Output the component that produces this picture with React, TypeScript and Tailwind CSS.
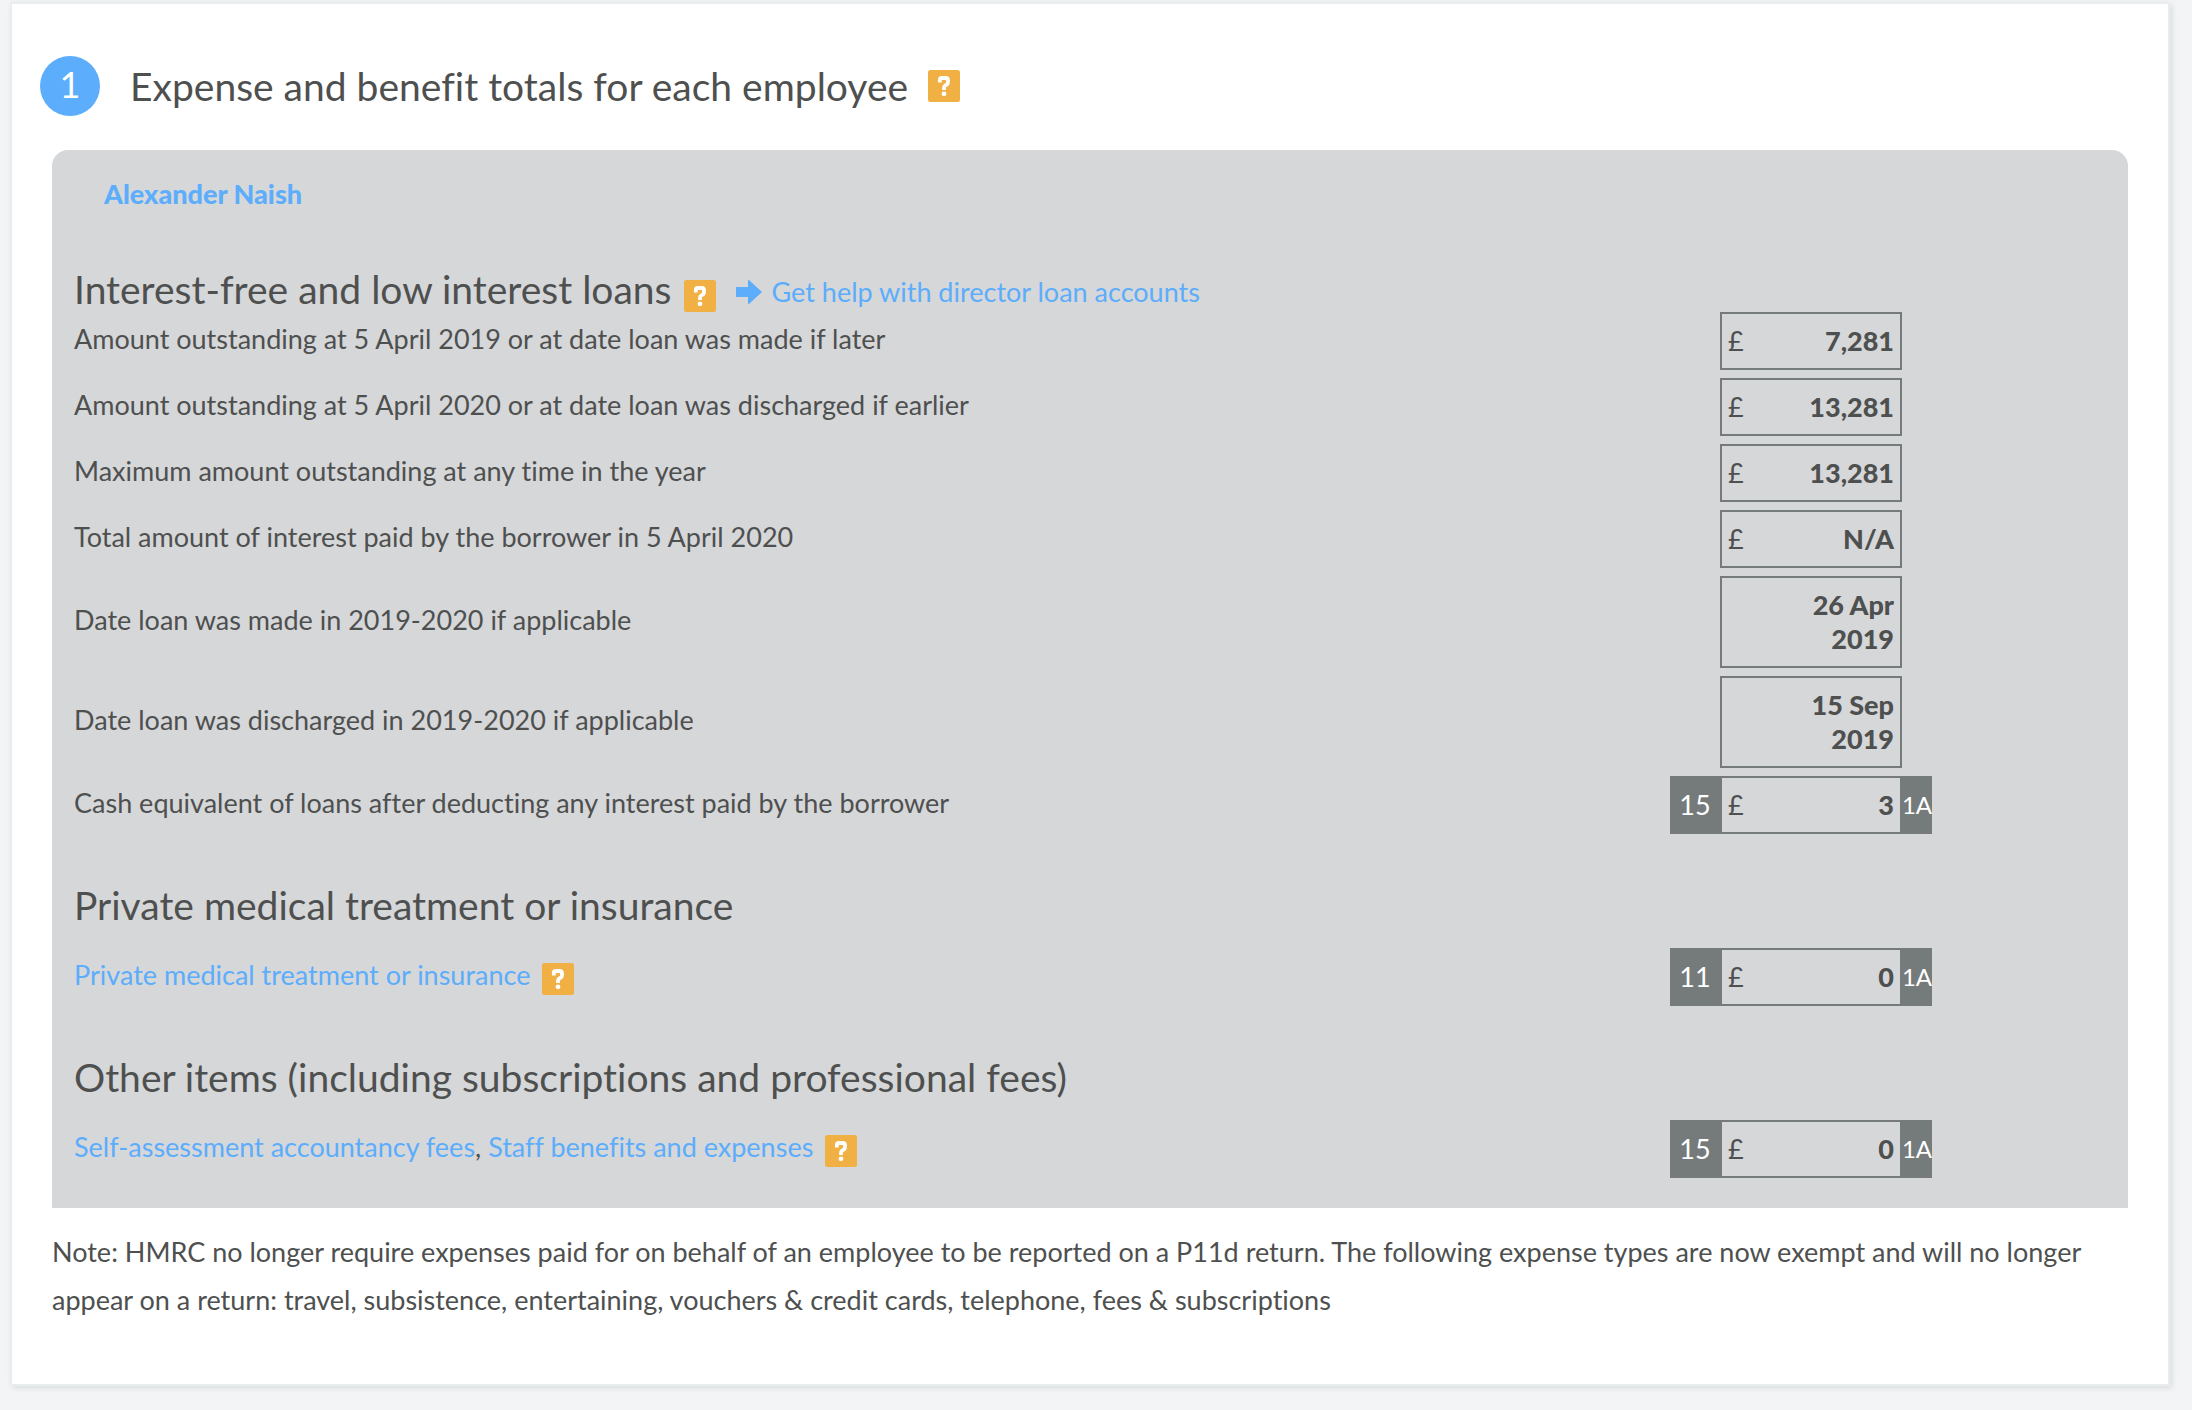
import React from "react";

function HelpIcon({ label }: { label: string }) {
  return (
    <button type="button" aria-label={label} className="block h-8 w-8 shrink-0">
      <svg viewBox="0 0 32 32" className="h-8 w-8" aria-hidden="true">
        <rect width="32" height="32" rx="2.500" fill="#f0b044" />
        <path
          d="M11.800 12.600V10.200Q11.800 8 14 8h3.600Q20 8 20 10.500v1.700Q20 13.800 18.600 14.600l-1.200.8Q16 16.200 16 17.800V20"
          fill="none"
          stroke="#fff"
          strokeWidth="3.800"
        />
        <circle cx="16" cy="23.800" r="2.400" fill="#fff" />
      </svg>
    </button>
  );
}

function ArrowIcon() {
  return (
    <svg viewBox="0 0 26 24" className="h-6 w-[26px] shrink-0" aria-hidden="true">
      <path d="M0 7h12V1q0-1.500 1.500-.5L26 12 13.500 23.500q-1.500 1-1.500-.5v-6H0z" fill="#5cadfb" />
    </svg>
  );
}

function TextLink({ children }: { children: React.ReactNode }) {
  return (
    <a href="#" className="text-[#5cadfb]">
      {children}
    </a>
  );
}

type RowProps = {
  label: React.ReactNode;
  value: string;
  currency?: boolean;
  box?: string;
  help?: string;
};

function Row({ label, value, currency = true, box, help }: RowProps) {
  return (
    <tr>
      <th scope="row" className="pb-3 text-left align-middle font-normal">
        {help ? (
          <span className="flex items-center gap-3">
            <span>{label}</span>
            <span className="mt-2">
              <HelpIcon label={help} />
            </span>
          </span>
        ) : (
          label
        )}
      </th>
      <td className="w-[262px] pb-2 align-middle">
        <div className={box ? "flex bg-[#747b7a] text-white" : "flex"}>
          <span className="flex w-[50px] shrink-0 items-center justify-center">{box}</span>
          <span className="flex min-h-[58px] w-[182px] shrink-0 items-center justify-between border-2 border-[#747b7a] bg-[#d6d7d9] px-1.5 py-2.5 leading-[34px] text-[#4e504f]">
            <span>{currency ? "£" : ""}</span>
            <strong className={currency ? "text-right font-black" : "w-[90px] text-right font-black"}>{value}</strong>
          </span>
          <span className="flex w-[30px] shrink-0 items-center justify-center text-2xl">{box ? "1A" : ""}</span>
        </div>
      </td>
    </tr>
  );
}

function Section({ children }: { children: React.ReactNode }) {
  return (
    <table className="w-full border-collapse">
      <tbody>{children}</tbody>
    </table>
  );
}

export default function App() {
  return (
    <div className="min-h-screen bg-[#f3f4f6] pt-0.5 pr-[22px] pb-6 pl-2.5 font-['Lato',sans-serif] text-[27px] leading-8 text-[#4e504f] [font-variant-ligatures:none]">
      <main className="border-2 border-[#e8edee] bg-white px-10 pt-[52px] pb-[60px] shadow-[2px_2px_6px_rgba(0,0,0,0.1)]">
        <header className="-ml-3 flex items-center">
          <span className="flex h-[60px] w-[60px] items-center justify-center rounded-full bg-[#5cadfb] pb-1 text-[36px] text-white">
            1
          </span>
          <h1 className="mr-5 ml-[30px] text-[39px] leading-[60px]">Expense and benefit totals for each employee</h1>
          <HelpIcon label="Help with expense and benefit totals" />
        </header>

        <section className="mt-[34px] rounded-t-2xl bg-[#d6d7d9] pt-7 pr-[196px] pb-[22px] pl-[22px]">
          <p className="ml-[30px] font-black">
            <TextLink>Alexander Naish</TextLink>
          </p>

          <div className="mt-14 flex h-[46px] items-end">
            <h2 className="mr-3 text-[39px] leading-[46px]">Interest-free and low interest loans</h2>
            <HelpIcon label="Help with interest-free loans" />
            <a href="#" className="ml-5 flex items-center gap-2.5 leading-10 text-[#5cadfb]">
              <ArrowIcon />
              Get help with director loan accounts
            </a>
          </div>
          <Section>
            <Row label="Amount outstanding at 5 April 2019 or at date loan was made if later" value="7,281" />
            <Row label="Amount outstanding at 5 April 2020 or at date loan was discharged if earlier" value="13,281" />
            <Row label="Maximum amount outstanding at any time in the year" value="13,281" />
            <Row label="Total amount of interest paid by the borrower in 5 April 2020" value="N/A" />
            <Row label="Date loan was made in 2019-2020 if applicable" value="26 Apr 2019" currency={false} />
            <Row label="Date loan was discharged in 2019-2020 if applicable" value="15 Sep 2019" currency={false} />
            <Row
              label="Cash equivalent of loans after deducting any interest paid by the borrower"
              value="3"
              box="15"
            />
          </Section>

          <h2 className="mt-10 mb-5 text-[39px] leading-[46px]">Private medical treatment or insurance</h2>
          <Section>
            <Row
              label={<TextLink>Private medical treatment or insurance</TextLink>}
              help="Help with private medical treatment"
              value="0"
              box="11"
            />
          </Section>

          <h2 className="mt-10 mb-5 text-[39px] leading-[46px]">
            Other items (including subscriptions and professional fees)
          </h2>
          <Section>
            <Row
              label={
                <>
                  <TextLink>Self-assessment accountancy fees</TextLink>, <TextLink>Staff benefits and expenses</TextLink>
                </>
              }
              help="Help with other items"
              value="0"
              box="15"
            />
          </Section>
        </section>

        <p className="mt-5 leading-[48px]">
          Note: HMRC no longer require expenses paid for on behalf of an employee to be reported on a P11d return. The
          following expense types are now exempt and will no longer appear on a return: travel, subsistence, entertaining,
          vouchers &amp; credit cards, telephone, fees &amp; subscriptions
        </p>
      </main>
    </div>
  );
}
